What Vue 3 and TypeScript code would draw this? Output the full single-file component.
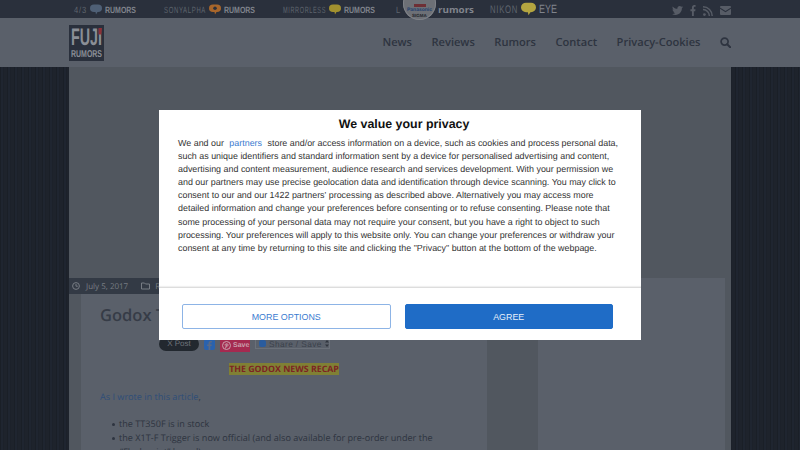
<template>
  <div class="page">
    <div class="topbar">
      <a v-for="site in sites" :key="site.label + site.tail" class="site" :class="site.mod">
        <svg class="word word--thin" :width="site.labelWidth" height="18">
          <text x="0" y="12.5" :textLength="site.labelWidth" lengthAdjust="spacingAndGlyphs">{{ site.label }}</text>
        </svg>
        <svg v-if="site.bubble" class="bubble" viewBox="0 0 24 20">
          <path :fill="site.bubble" d="M8 0h8a8 7.5 0 0 1 0 15h-1l-3 5-1-5H8A8 7.5 0 0 1 8 0z" />
          <circle v-if="site.dot" cx="12" cy="7.5" r="3.5" fill="#2a303c" />
        </svg>
        <svg class="word word--bold" :class="{ 'word--lower': site.tail === 'rumors' }" :width="site.tailWidth" height="18">
          <text x="0" y="12.5" :textLength="site.tailWidth" lengthAdjust="spacingAndGlyphs">{{ site.tail }}</text>
        </svg>
      </a>
      <div class="badge">
        <span class="badge__top"></span>
        <span class="badge__pana">Panasonic</span>
        <span class="badge__sigma">SIGMA</span>
      </div>
      <div class="social">
        <svg class="social__icon" width="11" height="11" viewBox="0 0 512 512"><path d="M459.37 151.716c.325 4.548.325 9.097.325 13.645 0 138.72-105.583 298.558-298.558 298.558-59.452 0-114.68-17.219-161.137-47.106 8.447.974 16.568 1.299 25.34 1.299 49.055 0 94.213-16.568 130.274-44.832-46.132-.975-84.792-31.188-98.112-72.772 6.498.974 12.995 1.624 19.818 1.624 9.421 0 18.843-1.3 27.614-3.573-48.081-9.747-84.143-51.98-84.143-102.985v-1.299c13.969 7.797 30.214 12.67 47.431 13.319-28.264-18.843-46.781-51.005-46.781-87.391 0-19.492 5.197-37.36 14.294-52.954 51.655 63.675 129.3 105.258 216.365 109.807-1.624-7.797-2.599-15.918-2.599-24.04 0-57.828 46.782-104.934 104.934-104.934 30.213 0 57.502 12.67 76.67 33.137 23.715-4.548 46.456-13.32 66.599-25.34-7.798 24.366-24.366 44.833-46.132 57.827 21.117-2.273 41.584-8.122 60.426-16.243-14.292 20.791-32.161 39.308-52.628 54.253z" /></svg>
        <svg class="social__icon" width="6" height="11" viewBox="0 0 320 512" preserveAspectRatio="none"><path d="M279.14 288l14.22-92.66h-88.91v-60.13c0-25.35 12.42-50.06 52.24-50.06h40.42V6.26S260.43 0 225.36 0c-73.22 0-121.08 44.38-121.08 124.72v70.62H22.89V288h81.39v224h100.17V288z" /></svg>
        <svg class="social__icon" width="10" height="10" viewBox="0 0 10 10"><circle cx="1.4" cy="8.6" r="1.4" /><path d="M0 3.6a6.4 6.4 0 0 1 6.4 6.4M0 .8A9.2 9.2 0 0 1 9.2 10" fill="none" stroke="#575c66" stroke-width="1.5" /></svg>
        <svg class="social__icon" width="11" height="9" viewBox="0 0 11 9"><path d="M0 1a1 1 0 0 1 1-1h9a1 1 0 0 1 1 1v.4L5.5 5 0 1.4zM0 2.8l5.5 3.5L11 2.8V8a1 1 0 0 1-1 1H1a1 1 0 0 1-1-1z" /></svg>
      </div>
    </div>

    <header class="header">
      <svg class="logo" width="35" height="36" viewBox="0 0 35 36">
        <rect width="35" height="36" fill="#2a303c" />
        <text x="2" y="20" textLength="31" lengthAdjust="spacingAndGlyphs" class="logo__fuji">FUJI</text>
        <path d="M29.5 3H33l-.8 6.5h-2.7z" fill="#8c3038" />
        <text x="2" y="32" textLength="31" lengthAdjust="spacingAndGlyphs" class="logo__rumors">RUMORS</text>
      </svg>
      <nav class="nav">
        <a v-for="item in navItems" :key="item">{{ item }}</a>
        <svg width="11" height="11" viewBox="0 0 11 11" fill="none" stroke="#2e3440"><circle cx="4.6" cy="4.6" r="3.5" stroke-width="1.7" /><path d="M7.2 7.2l3 3" stroke-width="2" stroke-linecap="round" /></svg>
      </nav>
    </header>

    <div class="wrap">
      <div class="ad-space"></div>
      <div class="columns">
        <main class="main">
          <div class="meta">
            <svg width="8" height="8" viewBox="0 0 8 8" fill="none" stroke="#777c84"><circle cx="4" cy="4" r="3.4" /><path d="M4 2v2.2h1.8" /></svg>
            <span class="meta__date">July 5, 2017</span>
            <svg width="9" height="8" viewBox="0 0 9 8" fill="none" stroke="#777c84"><path d="M.5 7V1h3l1 1h4v5z" /></svg>
            <span>Rumors</span>
          </div>
          <article class="post">
            <h1>Godox TT350F and X1T-F news</h1>
            <div class="share">
              <span class="share__x">X Post</span>
              <span class="share__fb">
                <svg width="7" height="9" viewBox="0 0 320 512"><path fill="#5a6a85" d="M279.14 288l14.22-92.66h-88.91v-60.13c0-25.35 12.42-50.06 52.24-50.06h40.42V6.26S260.43 0 225.36 0c-73.22 0-121.08 44.38-121.08 124.72v70.62H22.89V288h81.39v224h100.17V288z" /></svg>
              </span>
              <span class="share__pin">
                <svg width="9" height="9" viewBox="0 0 9 9" fill="none" stroke="#c9a0ad"><circle cx="4.5" cy="4.5" r="4" /><path d="M3.6 7.4l1-4M3 4.4c-.5-1.5 2.8-2.4 3-.6.1 1.6-1.6 2-2 1" /></svg>
                Save
              </span>
              <span class="share__add">
                <span class="share__plus"></span>
                <span class="share__label">Share / Save</span>
                <svg width="4" height="7" viewBox="0 0 4 7" fill="#30363f"><path d="M2 0l2 2.6H0zM2 7L0 4.4h4z" /></svg>
              </span>
            </div>
            <p class="recap"><mark>THE GODOX NEWS RECAP</mark></p>
            <p class="intro"><a>As I wrote in this article</a>,</p>
            <ul>
              <li>the TT350F is in stock</li>
              <li>the X1T-F Trigger is now official (and also available for pre-order under the “Flashpoint” brand)</li>
            </ul>
          </article>
        </main>
        <aside class="sidebar"></aside>
      </div>
    </div>

    <div class="consent">
      <div class="consent__box">
        <div class="consent__body">
          <h2>We value your privacy</h2>
          <p class="consent__text">
            <span>We and our <a>partners</a> store and/or access information on a device, such as cookies and process personal data,</span>
            <span v-for="line in consentLines" :key="line">{{ line }}</span>
          </p>
        </div>
        <div class="consent__actions">
          <button class="btn btn--outline">MORE OPTIONS</button>
          <button class="btn btn--solid">AGREE</button>
        </div>
      </div>
    </div>
  </div>
</template>

<script setup lang="ts">
interface Site {
  label: string;
  labelWidth: number;
  tail: string;
  tailWidth: number;
  bubble?: string;
  dot?: boolean;
  mod?: string;
}

const sites: Site[] = [
  { label: '4/3', labelWidth: 13, tail: 'RUMORS', tailWidth: 31, bubble: '#4f6076' },
  { label: 'SONYALPHA', labelWidth: 42, tail: 'RUMORS', tailWidth: 31, bubble: '#a8662b', dot: true },
  { label: 'MIRRORLESS', labelWidth: 43, tail: 'RUMORS', tailWidth: 31, bubble: '#a2912f' },
  { label: 'L', labelWidth: 5, tail: 'rumors', tailWidth: 36, mod: 'site--l' },
  { label: 'NIKON', labelWidth: 28, tail: 'EYE', tailWidth: 18, bubble: '#b4a540', mod: 'site--nikon' }
];

const navItems = ['News', 'Reviews', 'Rumors', 'Contact', 'Privacy-Cookies'];

const consentLines = [
  'such as unique identifiers and standard information sent by a device for personalised advertising and content,',
  'advertising and content measurement, audience research and services development. With your permission we',
  'and our partners may use precise geolocation data and identification through device scanning. You may click to',
  "consent to our and our 1422 partners' processing as described above. Alternatively you may access more",
  'detailed information and change your preferences before consenting or to refuse consenting. Please note that',
  'some processing of your personal data may not require your consent, but you have a right to object to such',
  'processing. Your preferences will apply to this website only. You can change your preferences or withdraw your',
  'consent at any time by returning to this site and clicking the "Privacy" button at the bottom of the webpage.'
];
</script>

<style>
html,
body {
  margin: 0;
  height: 100%;
  overflow: hidden;
  background: #1f2530;
}
</style>

<style scoped>
.page {
  position: relative;
  width: 800px;
  height: 450px;
  overflow: hidden;
  font-family: 'Open Sans', sans-serif;
  text-rendering: geometricPrecision;
  background-color: #1e232c;
  background-image: repeating-linear-gradient(90deg, #1a1f27 0, #1a1f27 1px, #1f2530 1px, #1f2530 3px, #1c212a 3px, #1c212a 4px, #1e232c 4px, #1e232c 7px);
}

.topbar {
  position: relative;
  display: flex;
  align-items: center;
  gap: 28px;
  height: 18px;
  padding-left: 74px;
  background: #2a303c;
}

.site {
  display: flex;
  align-items: center;
  gap: 3px;
  height: 18px;
}

.site--l {
  gap: 37px;
  margin-left: -7px;
}

.site--nikon {
  margin-left: -12px;
}

.word {
  font-family: 'Liberation Sans', sans-serif;
  overflow: visible;
}

.word--thin {
  font-size: 9px;
  letter-spacing: 1px;
  fill: #5f656e;
}

.word--bold {
  font-size: 9px;
  font-weight: 700;
  fill: #80848c;
}

.word--lower {
  font-family: 'Open Sans', sans-serif;
}

.site--nikon .word--thin {
  font-size: 11px;
}

.site--nikon .word--bold {
  font-size: 12px;
  font-weight: 400;
}

.bubble {
  width: 12px;
  height: 11px;
}

.site--nikon .bubble {
  width: 15px;
  height: 14px;
}

.badge {
  position: absolute;
  left: 403px;
  top: -13px;
  z-index: 2;
  display: flex;
  flex-direction: column;
  align-items: center;
  justify-content: flex-end;
  box-sizing: border-box;
  width: 33px;
  height: 33px;
  padding-bottom: 2px;
  border-radius: 50%;
  background: #6d7076;
  box-shadow: inset 0 0 0 1px #7f8288;
  font-family: 'Liberation Sans', sans-serif;
  line-height: 5px;
}

.badge__top {
  width: 12px;
  height: 3px;
  margin-bottom: 1px;
  background: #6e2f35;
}

.badge__pana {
  font-size: 5px;
  font-weight: 700;
  color: #22406e;
}

.badge__sigma {
  font-size: 4.5px;
  font-weight: 700;
  color: #22262c;
}

.social {
  position: absolute;
  right: 69px;
  top: 5px;
  display: flex;
  align-items: center;
  gap: 7px;
}

.social__icon {
  fill: #575c66;
}

.header {
  display: flex;
  align-items: center;
  justify-content: space-between;
  box-sizing: border-box;
  height: 49px;
  padding: 0 69px;
  background: #5a606a;
}

.logo {
  font-family: 'Liberation Sans', sans-serif;
  font-weight: 700;
  fill: #8a8e96;
}

.logo__fuji {
  font-size: 24px;
}

.logo__rumors {
  font-size: 10px;
}

.nav {
  display: flex;
  align-items: center;
  gap: 19.5px;
  font-size: 11.1px;
  font-weight: 600;
  color: #2e3440;
}

.wrap {
  box-sizing: border-box;
  width: 662px;
  height: 383px;
  margin: 0 auto;
  background: #51575f;
}

.ad-space {
  height: 211px;
}

.columns {
  display: flex;
  align-items: flex-start;
}

.main {
  width: 418px;
}

.meta {
  display: flex;
  align-items: center;
  gap: 5px;
  box-sizing: border-box;
  height: 16px;
  padding-left: 3px;
  background: #333a45;
  font-size: 8px;
  color: #777c84;
}

.meta__date {
  margin-left: 1px;
  margin-right: 8px;
}

.post {
  box-sizing: border-box;
  height: 156px;
  margin-left: 12px;
  padding: 10px 19px 0;
  background: #5a606a;
  font-size: 9.1px;
  color: #2e3440;
}

.post h1 {
  margin: 0;
  font-size: 16.5px;
  line-height: 22px;
  font-weight: 600;
  white-space: nowrap;
  color: #363c47;
}

.share {
  display: flex;
  align-items: flex-start;
  gap: 5px;
  height: 16px;
  margin: 13px 0 0 59px;
  font-family: 'Liberation Sans', sans-serif;
}

.share__x {
  box-sizing: border-box;
  width: 40px;
  height: 14px;
  margin-top: -2px;
  padding-top: 2px;
  border-radius: 7px;
  background: #22282f;
  text-align: center;
  font-size: 8px;
  color: #6f747b;
}

.share__fb {
  display: flex;
  align-items: flex-end;
  justify-content: center;
  width: 11px;
  height: 11px;
  border-radius: 2px;
  background: #2a62ad;
}

.share__pin {
  display: flex;
  align-items: center;
  gap: 2px;
  box-sizing: border-box;
  width: 30px;
  height: 13px;
  padding-left: 2px;
  background: #a52a50;
  font-size: 7px;
  font-weight: 700;
  color: #c9a0ad;
}

.share__add {
  display: flex;
  align-items: center;
  gap: 3px;
  box-sizing: border-box;
  width: 75px;
  height: 10px;
  padding-left: 3px;
  border: 1px solid #6a7079;
  border-top: 0;
  font-size: 8.3px;
  letter-spacing: 0.4px;
  color: #3a404a;
}

.share__label {
  white-space: nowrap;
}

.share__plus {
  width: 7px;
  height: 7px;
  border-radius: 2px;
  background: #2a5c9e;
}

.recap {
  margin: 8px 0 0;
  text-align: center;
  font-size: 8.8px;
  font-weight: 700;
  line-height: 13px;
}

.recap mark {
  padding: 0;
  background: #808034;
  color: #7d2323;
}

.intro {
  margin: 14px 0 0;
  line-height: 14px;
}

.intro a {
  color: #2f4e78;
}

.post ul {
  margin: 13px 0 0;
  padding-left: 20px;
  list-style: none;
}

.post li {
  line-height: 14px;
}

.post li::before {
  content: '';
  display: inline-block;
  width: 3px;
  height: 3px;
  margin: 0 4px 1.5px -8px;
  border-radius: 50%;
  background: #2e3440;
}

.sidebar {
  width: 187px;
  height: 172px;
  margin-left: 51px;
  background: #5a606a;
}

.consent {
  position: fixed;
  inset: 0;
  z-index: 5;
  display: flex;
  align-items: center;
  justify-content: center;
}

.consent__box {
  display: flex;
  flex-direction: column;
  width: 482px;
  height: 230px;
  background: #fff;
  font-family: 'Liberation Sans', sans-serif;
}

.consent__body {
  flex: 1;
  padding: 6px 19px 0;
}

.consent__body h2 {
  margin: 0 0 4px;
  padding-left: 8px;
  text-align: center;
  font-size: 12.4px;
  line-height: 17px;
  font-weight: 700;
  color: #111;
}

.consent__text {
  margin: 0;
  font-size: 8.92px;
  line-height: 13.1px;
  color: #333;
  white-space: nowrap;
}

.consent__text span {
  display: block;
}

.consent__text a {
  padding: 0 3px;
  color: #3a7bd0;
}

.consent__actions {
  display: flex;
  gap: 14px;
  box-sizing: border-box;
  height: 53px;
  padding: 16px 28px 0 23px;
  border-top: 1px solid #ddd;
  box-shadow: 0 -1px 1px rgba(0, 0, 0, 0.06);
}

.btn {
  flex: 1;
  height: 25px;
  border-radius: 2px;
  font-family: inherit;
  font-size: 8.9px;
}

.btn--outline {
  border: 1px solid #8db4e6;
  background: #fff;
  color: #3a7bd0;
}

.btn--solid {
  border: 1px solid #1d6cc8;
  background: #1f6cc6;
  color: #e8f0fa;
}
</style>
